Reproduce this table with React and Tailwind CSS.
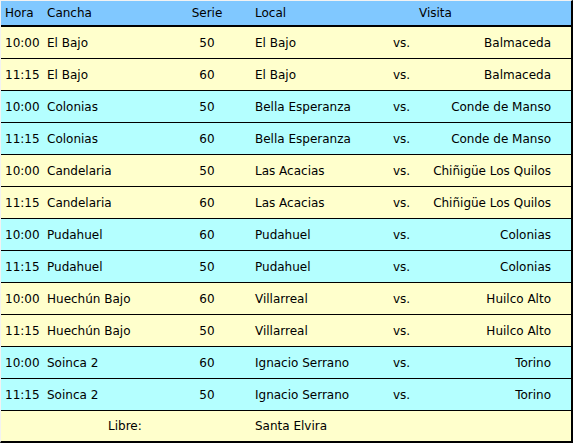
const rows = [
  ["10:00", "El Bajo", "50", "El Bajo", "Balmaceda"],
  ["11:15", "El Bajo", "60", "El Bajo", "Balmaceda"],
  ["10:00", "Colonias", "50", "Bella Esperanza", "Conde de Manso"],
  ["11:15", "Colonias", "60", "Bella Esperanza", "Conde de Manso"],
  ["10:00", "Candelaria", "50", "Las Acacias", "Chiñigüe Los Quilos"],
  ["11:15", "Candelaria", "60", "Las Acacias", "Chiñigüe Los Quilos"],
  ["10:00", "Pudahuel", "60", "Pudahuel", "Colonias"],
  ["11:15", "Pudahuel", "50", "Pudahuel", "Colonias"],
  ["10:00", "Huechún Bajo", "60", "Villarreal", "Huilco Alto"],
  ["11:15", "Huechún Bajo", "50", "Villarreal", "Huilco Alto"],
  ["10:00", "Soinca 2", "60", "Ignacio Serrano", "Torino"],
  ["11:15", "Soinca 2", "50", "Ignacio Serrano", "Torino"],
];

const cols = "grid grid-cols-[42px_137px_54px_151px_33px_153px] items-center";

export default function App() {
  return (
    <div className="w-[573px] h-[443px] bg-white text-black text-[12px]" style={{ fontFamily: '"DejaVu Sans", Verdana, sans-serif' }}>
      <div className="border-t border-l border-[#f2f2f2] border-r-2 border-r-black border-b-2 border-b-black">
        {/* header */}
        <div className={`${cols} h-[26px] bg-[#80c8ff] border-b-2 border-black`}>
          <span className="pl-[4px]">Hora</span>
          <span className="pl-[4px]">Cancha</span>
          <span className="text-center">Serie</span>
          <span className="pl-[21px]">Local</span>
          <span></span>
          <span className="pl-px">Visita</span>
        </div>

        {rows.map((r, i) => (
          <div
            key={i}
            className={`${cols} h-[32px] border-b border-black ${Math.floor(i / 2) % 2 === 0 ? "bg-[#ffffcc]" : "bg-[#b4ffff]"}`}
          >
            <span className="pl-[4px]">{r[0]}</span>
            <span className="pl-[4px]">{r[1]}</span>
            <span className="text-center">{r[2]}</span>
            <span className="pl-[21px]">{r[3]}</span>
            <span className="text-center">vs.</span>
            <span className="text-right pr-[20px]">{r[4]}</span>
          </div>
        ))}

        <div className={`${cols} h-[30px] bg-[#ffffcc]`}>
          <span className="col-span-3 pl-[107px]">Libre:</span>
          <span className="pl-[21px]">Santa Elvira</span>
        </div>
      </div>
    </div>
  );
}
